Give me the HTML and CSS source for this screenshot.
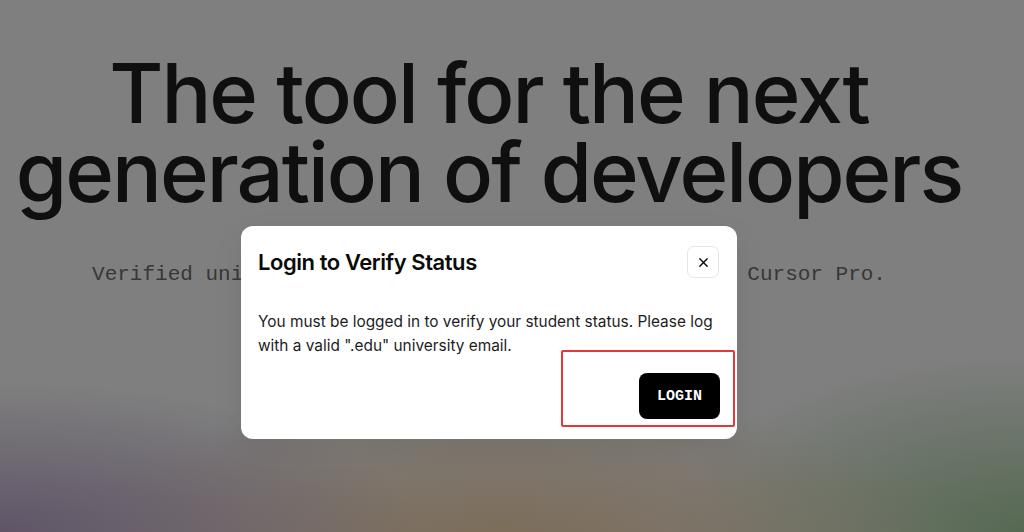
FILE: index.html
```html
<!DOCTYPE html>
<html lang="en">
<head>
    <meta charset="UTF-8">
    <meta name="viewport" content="width=device-width, initial-scale=1.0">
    <title>Cursor for Students</title>
    <link rel="stylesheet" href="styles.css">
</head>
<body>
    <div class="page">
        <section class="hero">
            <h1 class="hero-title">The tool for the next<br>generation of developers</h1>
            <p class="hero-sub">Verified university students can get a free year of Cursor Pro.</p>
        </section>

        <div class="overlay">
            <div class="modal">
                <div class="modal-header">
                    <h2 class="modal-title">Login to Verify Status</h2>
                    <button class="close-btn" aria-label="Close">
                        <svg width="11" height="11" viewBox="0 0 12 12" fill="none" stroke="#111" stroke-width="1.6" stroke-linecap="round">
                            <path d="M2 2L10 10M10 2L2 10"/>
                        </svg>
                    </button>
                </div>
                <p class="modal-text">You must be logged in to verify your student status. Please log with a valid ".edu" university email.</p>
                <div class="modal-footer">
                    <button class="login-btn">LOGIN</button>
                    <div class="highlight"></div>
                </div>
            </div>
        </div>
    </div>
</body>
</html>
```

FILE: styles.css
```css
* {
    margin: 0;
    padding: 0;
    box-sizing: border-box;
}

body {
    width: 1024px;
    height: 532px;
    overflow: hidden;
    background:
        radial-gradient(ellipse 420px 150px at 0 532px, rgba(92, 80, 100, 0.9), rgba(92, 80, 100, 0) 100%),
        radial-gradient(ellipse 460px 150px at 500px 545px, rgba(124, 104, 80, 0.85), rgba(124, 104, 80, 0) 100%),
        radial-gradient(ellipse 360px 180px at 1024px 532px, rgba(84, 104, 80, 0.95), rgba(84, 104, 80, 0) 100%),
        #7f7f7f;
    font-family: Inter, "Noto Sans", sans-serif;
}

.page {
    position: relative;
    width: 978px;
    height: 532px;
}

.hero {
    padding-top: 54px;
    text-align: center;
}

.hero-title {
    font-family: Inter, "Liberation Sans", sans-serif;
    font-size: 83px;
    font-weight: 500;
    line-height: 79px;
    letter-spacing: -0.024em;
    color: #0f0f0f;
}

.hero-sub {
    margin-top: 51px;
    font-family: "Liberation Mono", monospace;
    font-size: 21px;
    color: #373737;
}

/* dialog sits over the dimmed page */
.overlay {
    position: absolute;
    inset: 0;
    display: flex;
    justify-content: center;
    align-items: flex-start;
    padding-top: 226px;
}

.modal {
    width: 496px;
    background: white;
    border-radius: 12px;
    padding: 20px 17px 20px 17px;
    box-shadow: 0 10px 30px rgba(0, 0, 0, 0.08);
}

.modal-header {
    display: flex;
    justify-content: space-between;
    align-items: center;
}

.modal-title {
    font-size: 22px;
    font-weight: 600;
    letter-spacing: -0.02em;
    color: #0a0a0a;
}

.close-btn {
    width: 32px;
    height: 32px;
    border: 1px solid #e6e6e6;
    border-radius: 7px;
    background: white;
    display: flex;
    align-items: center;
    justify-content: center;
    margin-right: 1px;
}

.modal-text {
    margin-top: 32px;
    font-size: 15.4px;
    line-height: 24px;
    color: #1d1d1d;
}

.modal-footer {
    position: relative;
    display: flex;
    justify-content: flex-end;
    margin-top: 15px;
}

.login-btn {
    width: 81px;
    height: 46px;
    background: #000;
    color: white;
    border: none;
    border-radius: 8px;
    font-family: "Liberation Mono", monospace;
    font-weight: bold;
    font-size: 15px;
}

/* annotation box around the button */
.highlight {
    position: absolute;
    right: -15px;
    top: -23px;
    width: 174px;
    height: 77px;
    border: 2px solid #e53935;
    border-radius: 2px;
}
```
